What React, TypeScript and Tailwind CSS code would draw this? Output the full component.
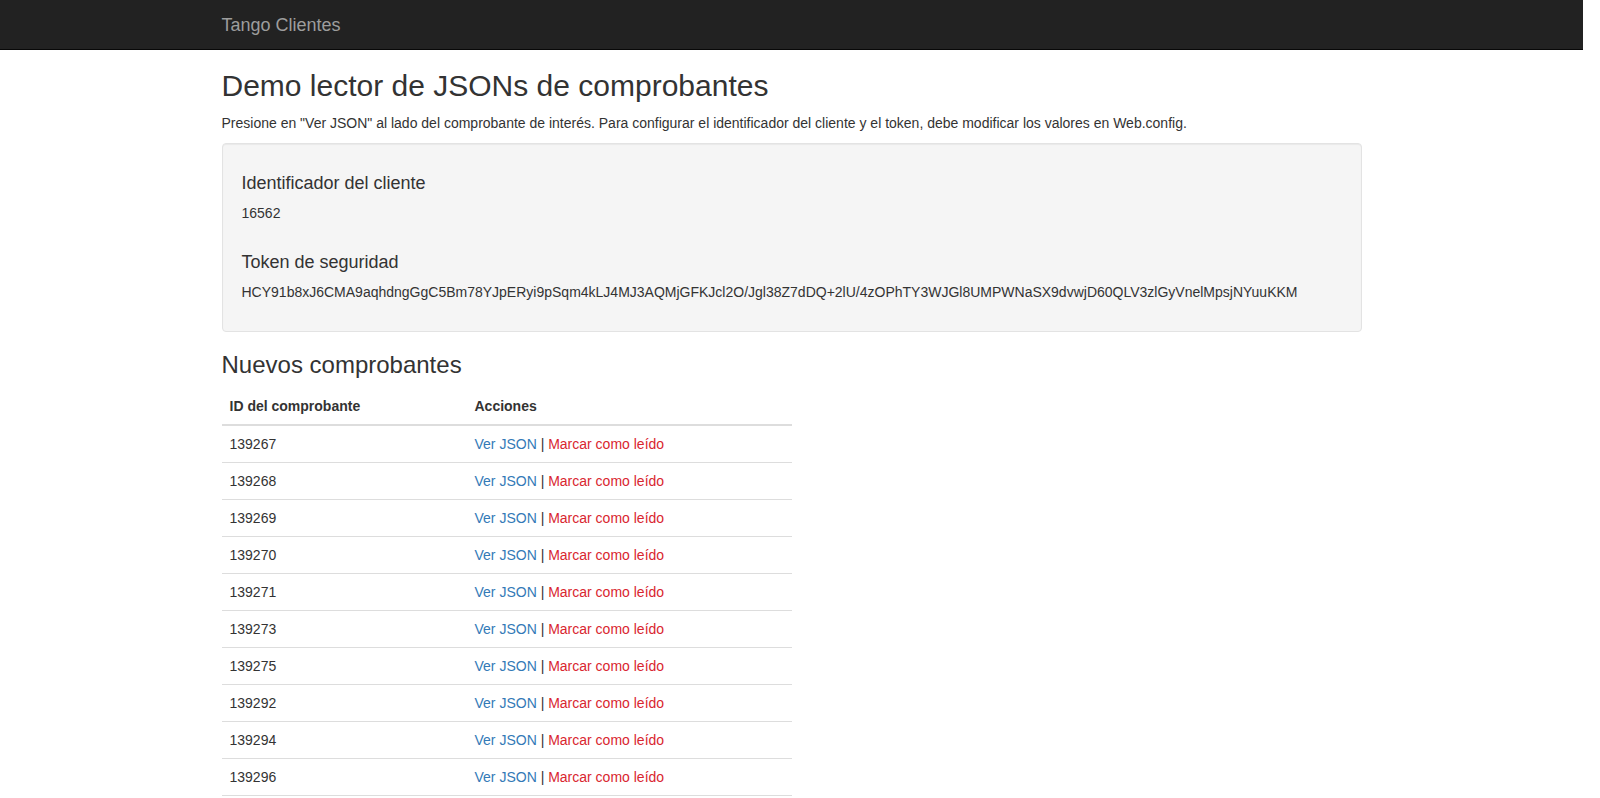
import React from "react";

const ids = [
  "139267",
  "139268",
  "139269",
  "139270",
  "139271",
  "139273",
  "139275",
  "139292",
  "139294",
  "139296",
];

export default function App() {
  return (
    <div
      className="w-[1583px] h-[798px] overflow-hidden bg-white text-[#333] text-[14px] leading-[20px]"
      style={{ fontFamily: '"Liberation Sans", Arial, Helvetica, sans-serif' }}
    >
      <div className="h-[50px] bg-[#222] border-b border-[#080808]">
        <div className="w-[1170px] mx-auto px-[15px]">
          <div className="h-[49px] flex items-center text-[18px] leading-[20px] text-[#9d9d9d]">
            Tango Clientes
          </div>
        </div>
      </div>
      <div className="w-[1170px] mx-auto px-[15px]">
        <h2 className="mt-[19px] mb-[11px] text-[30px] leading-[33px] font-normal">
          Demo lector de JSONs de comprobantes
        </h2>
        <p className="mb-[10px]">
          Presione en "Ver JSON" al lado del comprobante de interés. Para configurar el identificador del cliente y el token, debe modificar los valores en Web.config.
        </p>
        <div className="mb-[20px] p-[19px] bg-[#f5f5f5] border border-[#e3e3e3] rounded-[4px] shadow-[inset_0_1px_1px_rgba(0,0,0,0.05)]">
          <h4 className="mt-[10px] mb-[10px] text-[18px] leading-[20px] font-normal">
            Identificador del cliente
          </h4>
          <p className="mb-[29px]">16562</p>
          <h4 className="mb-[10px] text-[18px] leading-[20px] font-normal">
            Token de seguridad
          </h4>
          <p className="mb-[10px]">
            HCY91b8xJ6CMA9aqhdngGgC5Bm78YJpERyi9pSqm4kLJ4MJ3AQMjGFKJcl2O/Jgl38Z7dDQ+2lU/4zOPhTY3WJGl8UMPWNaSX9dvwjD60QLV3zlGyVnelMpsjNYuuKKM
          </p>
        </div>
        <h3 className="mb-[10px] text-[24px] leading-[26px] font-normal">
          Nuevos comprobantes
        </h3>
        <table className="w-[570px] border-collapse">
          <thead>
            <tr>
              <th className="w-[245px] text-left font-bold p-[8px] leading-[20px] border-b-2 border-[#ddd]">
                ID del comprobante
              </th>
              <th className="text-left font-bold p-[8px] leading-[20px] border-b-2 border-[#ddd]">
                Acciones
              </th>
            </tr>
          </thead>
          <tbody>
            {ids.map((id) => (
              <tr key={id}>
                <td className="p-[8px] leading-[20px] border-t border-b border-[#ddd]">{id}</td>
                <td className="p-[8px] leading-[20px] border-t border-b border-[#ddd]">
                  <a className="text-[#337ab7]" href="#">
                    Ver JSON
                  </a>{" "}
                  |{" "}
                  <a className="text-[#d9262f]" href="#">
                    Marcar como leído
                  </a>
                </td>
              </tr>
            ))}
          </tbody>
        </table>
      </div>
    </div>
  );
}
